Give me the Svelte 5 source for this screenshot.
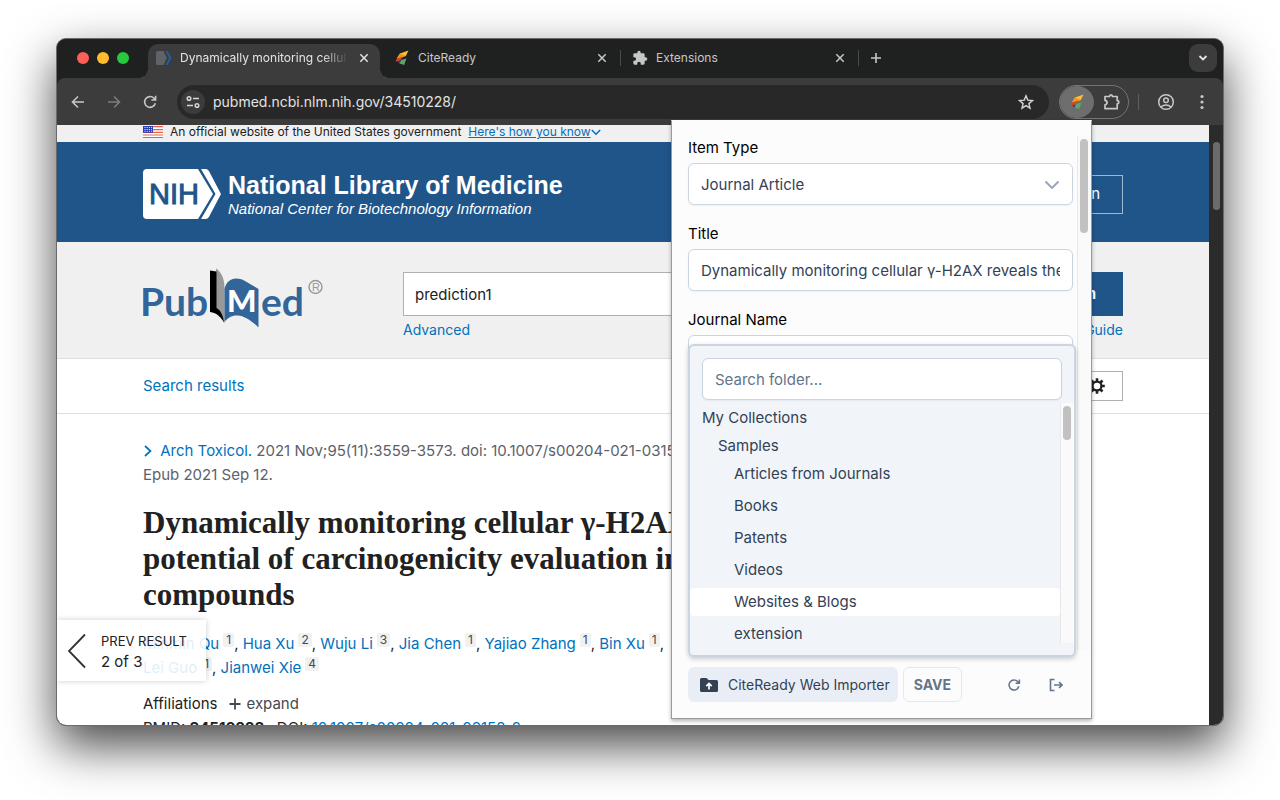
<script lang="ts">
	type Folder = { name: string; depth: number };

	const folders: Folder[] = [
		{ name: 'My Collections', depth: 0 },
		{ name: 'Samples', depth: 1 },
		{ name: 'Articles from Journals', depth: 2 },
		{ name: 'Books', depth: 2 },
		{ name: 'Patents', depth: 2 },
		{ name: 'Videos', depth: 2 },
		{ name: 'Websites & Blogs', depth: 2 },
		{ name: 'extension', depth: 2 }
	];

	const authors = [
		{ name: 'Minmin Qu', aff: 1 },
		{ name: 'Hua Xu', aff: 2 },
		{ name: 'Wuju Li', aff: 3 },
		{ name: 'Jia Chen', aff: 1 },
		{ name: 'Yajiao Zhang', aff: 1 },
		{ name: 'Bin Xu', aff: 1 },
		{ name: 'Lei Guo', aff: 1 },
		{ name: 'Jianwei Xie', aff: 4 }
	];

	let selected = $state('Websites & Blogs');
	let itemType = $state('Journal Article');
	let title = $state('Dynamically monitoring cellular γ-H2AX reveals the potential of carcinogenicity evaluation');
	let journal = $state('');
	let folderQuery = $state('');
	let term = $state('prediction1');

	let visible = $derived(
		folders.filter((f) => f.name.toLowerCase().includes(folderQuery.toLowerCase()))
	);
</script>

{#snippet closeIcon()}
	<svg width="16" height="16" viewBox="0 0 16 16" fill="none" stroke="currentColor" stroke-width="1.5">
		<path d="M4.300 4.300l7.400 7.400M11.700 4.300l-7.400 7.400" />
	</svg>
{/snippet}

{#snippet citeLogo()}
	<svg width="16" height="16" viewBox="0 0 16 16">
		<path d="M14.5 0.5L6 3.6 2.8 8.6 11.8 6z" fill="#fbc02d" />
		<path d="M6 3.6L2.8 8.6 11.8 6z" fill="#f6931e" />
		<path d="M2.8 8.6L1.4 11.4 6 10.4 9.6 6.8z" fill="#d9431e" />
		<path d="M3 11.4l2.6 2.3 1.3-3.5z" fill="#4b3a86" />
		<path d="M7.2 10l5.2-1.6-2.2 6.6-4.6-1.4z" fill="#57a866" />
	</svg>
{/snippet}

<main class="desktop">
	<div class="window">
		<div class="tabstrip">
			<div class="lights">
				<span class="light red"></span>
				<span class="light yellow"></span>
				<span class="light green"></span>
			</div>
			<div class="tab active">
				<svg width="16" height="16" viewBox="0 0 16 16">
					<path d="M1.500 1H7.500l3.300 7-3.300 7H1.500A1.500 1.500 0 0 1 0 13.500V2.500A1.500 1.500 0 0 1 1.500 1z" fill="#5f6368" />
					<path d="M9.500 1h2L15.500 8l-4 7h-2l3.600-7z" fill="#205fa6" />
				</svg>
				<span class="tab-title fade">Dynamically monitoring cellular</span>
				<button class="tab-close" aria-label="Close tab">{@render closeIcon()}</button>
			</div>
			<div class="tab">
				{@render citeLogo()}
				<span class="tab-title">CiteReady</span>
				<button class="tab-close" aria-label="Close tab">{@render closeIcon()}</button>
			</div>
			<span class="tab-sep"></span>
			<div class="tab">
				<svg width="16" height="16" viewBox="0 0 24 24" fill="#c7c7c7">
					<path d="M20.500 11H19V7a2 2 0 0 0-2-2h-4V3.500a2.500 2.500 0 0 0-5 0V5H4a2 2 0 0 0-2 2v3.800h1.500a2.700 2.700 0 0 1 0 5.400H2V20a2 2 0 0 0 2 2h3.800v-1.500a2.700 2.700 0 0 1 5.400 0V22H17a2 2 0 0 0 2-2v-4h1.500a2.500 2.500 0 0 0 0-5z" />
				</svg>
				<span class="tab-title">Extensions</span>
				<button class="tab-close" aria-label="Close tab">{@render closeIcon()}</button>
			</div>
			<span class="tab-sep"></span>
			<button class="new-tab" aria-label="New tab">
				<svg width="16" height="16" viewBox="0 0 16 16" fill="none" stroke="currentColor" stroke-width="1.6">
					<path d="M8 3v10M3 8h10" />
				</svg>
			</button>
			<button class="tab-search" aria-label="Search tabs">
				<svg width="12" height="12" viewBox="0 0 12 12" fill="none" stroke="#e3e3e3" stroke-width="1.8">
					<path d="M2.500 4l3.500 3.500L9.500 4" />
				</svg>
			</button>
		</div>

		<div class="toolbar">
			<button class="tool" aria-label="Back">
				<svg width="18" height="18" viewBox="0 0 18 18" fill="none" stroke="#c7c7c7" stroke-width="1.600">
					<path d="M15 9H4M9 3.500L3.500 9 9 14.500" />
				</svg>
			</button>
			<button class="tool" aria-label="Forward">
				<svg width="18" height="18" viewBox="0 0 18 18" fill="none" stroke="#7c7c7c" stroke-width="1.600">
					<path d="M3 9h11M9 3.500L14.500 9 9 14.500" />
				</svg>
			</button>
			<button class="tool" aria-label="Reload">
				<svg width="18" height="18" viewBox="0 0 18 18" fill="none" stroke="#c7c7c7" stroke-width="1.600">
					<path d="M14.300 10.200A5.400 5.400 0 1 1 13 5.300L14.500 7M14.600 2.800V7H10.400" />
				</svg>
			</button>
			<div class="omnibox">
				<button class="site-info" aria-label="Site information">
					<svg width="16" height="16" viewBox="0 0 16 16" fill="none" stroke="#d5d5d5" stroke-width="1.500">
						<circle cx="4" cy="4.500" r="1.800" />
						<path d="M8 4.500h6M2 11.500h6" />
						<circle cx="12" cy="11.500" r="1.800" />
					</svg>
				</button>
				<input class="url" aria-label="Address bar" value="pubmed.ncbi.nlm.nih.gov/34510228/" />
				<button class="star" aria-label="Bookmark">
					<svg width="18" height="18" viewBox="0 0 18 18" fill="none" stroke="#d5d5d5" stroke-width="1.400">
						<path d="M9 2.800l1.800 4.300 4.700.4-3.600 3.100 1.100 4.600L9 12.700l-4 2.500 1.100-4.600L2.500 7.500l4.700-.4z" />
					</svg>
				</button>
			</div>
			<div class="ext-pill">
				<button class="ext current" aria-label="CiteReady extension">{@render citeLogo()}</button>
				<button class="ext" aria-label="Extensions menu">
					<svg width="20" height="20" viewBox="0 0 20 20" fill="none" stroke="#c7c7c7" stroke-width="1.700">
						<path d="M4 4.500h4.500c0-2.200 3-2.200 3 0h4.700v4.200c2.200 0 2.200 3.200 0 3.200v4.800H4v-3.900c2.800-.4 2.800-4 0-4.400z" stroke-linejoin="round" />
					</svg>
				</button>
			</div>
			<span class="tool-sep"></span>
			<button class="tool" aria-label="Profile">
				<svg width="18" height="18" viewBox="0 0 18 18" fill="none" stroke="#c7c7c7" stroke-width="1.500">
					<circle cx="9" cy="9" r="7.300" />
					<circle cx="9" cy="7.200" r="2.300" />
					<path d="M4 14c2.800-2.700 7.200-2.700 10 0" />
				</svg>
			</button>
			<button class="tool" aria-label="Menu">
				<svg width="18" height="18" viewBox="0 0 18 18" fill="#c7c7c7">
					<circle cx="9" cy="3.500" r="1.600" />
					<circle cx="9" cy="9" r="1.600" />
					<circle cx="9" cy="14.500" r="1.600" />
				</svg>
			</button>
		</div>

		<div class="viewport">
			<div class="page">
				<div class="gov-banner">
					<div class="container gov-inner">
						<svg width="20" height="12" viewBox="0 0 20 12">
							<rect width="20" height="12" fill="#fff" />
							<path d="M0 .7h20M0 3.600h20M0 6.300h20M0 9h20M0 11.500h20" stroke="#e8604a" stroke-width="1.200" />
							<rect width="10" height="6.800" fill="#2b3fb5" />
							<path d="M1.500 1.500h8M1.500 3.500h8M1.500 5.300h8" stroke="#fff" stroke-width=".9" stroke-dasharray="1 1.200" />
						</svg>
						<span>An official website of the United States government</span>
						<a href="#know">Here's how you know
							<svg width="10" height="8" viewBox="0 0 10 8" fill="none" stroke="#0071bc" stroke-width="1.500">
								<path d="M.8 2L5 6.200 9.200 2" />
							</svg></a>
					</div>
				</div>

				<header class="nih-header">
					<div class="container nih-inner">
						<a class="nih-brand" href="#nih" aria-label="National Library of Medicine">
							<svg width="78" height="50" viewBox="0 0 78 50">
								<path d="M4 0H55L70 25 55 50H4A4 4 0 0 1 0 46V4A4 4 0 0 1 4 0z" fill="#fff" />
								<path d="M58 0h4.500a4 4 0 0 1 3.400 2L78 25 65.900 48a4 4 0 0 1-3.400 2H58l14.500-25z" fill="#fff" />
								<text x="6" y="35" class="nih-mark">NIH</text>
							</svg>
							<span class="nih-text">
								<strong>National Library of Medicine</strong>
								<em>National Center for Biotechnology Information</em>
							</span>
						</a>
						<button class="login">Log in</button>
					</div>
				</header>

				<section class="search-band">
					<div class="container search-inner">
						<a class="pubmed-logo" href="#home" aria-label="PubMed">
							<svg width="182" height="64" viewBox="0 0 182 64">
								<text x="-3" y="49" class="pub-text">Pub</text>
								<path d="M73 1.500c5 3 8.500 10 8.500 19V56c-2-8-5-12-8.500-14z" fill="#999" />
								<path d="M67 3.500l6.500 1V41c4 2 6.500 7 7.800 15-3.300-6-7.300-10-14.300-11z" fill="#000" />
								<path d="M81.500 22C84 12 92 9 102 14l13.500 8v38.500C108 53 101 49 95 48.500c-6-.5-10 2-13.500 6.500z" fill="#326599" />
								<text x="84" y="45" class="m-text">M</text>
								<text x="118" y="49" class="pub-text">ed</text>
								<circle cx="172.500" cy="20" r="6.500" fill="none" stroke="#999" stroke-width="1.400" />
								<text x="169" y="24" class="reg">R</text>
							</svg>
						</a>
						<form class="search-form" onsubmit={(e) => e.preventDefault()}>
							<div class="search-row">
								<input aria-label="Search term" bind:value={term} />
								<button>Search</button>
							</div>
							<div class="search-links">
								<a href="#advanced">Advanced</a>
								<a href="#guide">User Guide</a>
							</div>
						</form>
					</div>
				</section>

				<div class="results-bar">
					<div class="container results-inner">
						<a href="#results">Search results</a>
						<button aria-label="Display options">
							<svg width="18" height="18" viewBox="0 0 18 18" fill="none" stroke="#212121">
								<circle cx="9" cy="9" r="4.400" stroke-width="2.200" />
								<path d="M9 1.200v3M9 13.800v3M1.200 9h3M13.800 9h3M3.500 3.500l2 2M12.500 12.500l2 2M3.500 14.500l2-2M12.500 5.500l2-2" stroke-width="2.600" />
							</svg>
						</button>
					</div>
				</div>

				<article class="container article">
					<p class="citation">
						<svg width="10" height="14" viewBox="0 0 10 14" fill="none" stroke="#0071bc" stroke-width="1.700">
							<path d="M2 2l5.500 5L2 12" />
						</svg>
						<a href="#journal">Arch Toxicol.</a> 2021 Nov;95(11):3559-3573. doi: 10.1007/s00204-021-03158-2.<br />Epub 2021 Sep 12.
					</p>
					<h1>Dynamically monitoring cellular γ-H2AX reveals the<br />potential of carcinogenicity evaluation in<br />compounds</h1>
					<p class="authors">
						{#each authors as a, i}
							<span class="author"><a href="#author">{a.name}</a><sup>{a.aff}</sup>{i < authors.length - 1 ? ',' : ''}</span>{' '}
							{#if i === 5}<br />{/if}
						{/each}
					</p>
					<p class="affiliations">
						Affiliations
						<button>
							<svg width="12" height="12" viewBox="0 0 12 12" stroke="#424a52" stroke-width="1.800">
								<path d="M6 .5v11M.5 6h11" />
							</svg>
							expand
						</button>
					</p>
					<p class="ids">PMID: <strong>34510228</strong> &nbsp; DOI: <a href="#doi">10.1007/s00204-021-03158-2</a></p>
				</article>

				<a class="prev" href="#prev">
					<svg width="20" height="36" viewBox="0 0 20 36" fill="none" stroke="#333" stroke-width="1.800">
						<path d="M18 1.500L2 18l16 16.500" />
					</svg>
					<span>
						<small>PREV RESULT</small>
						<b>2 of 3</b>
					</span>
				</a>
			</div>
			<div class="page-scroll"><span></span></div>
		</div>

		<div class="popup">
			<div class="popup-body">
				<div class="fields">
					<div class="field">
						<label for="item-type">Item Type</label>
						<div class="select-wrap">
							<select id="item-type" bind:value={itemType}>
								<option>Journal Article</option>
								<option>Book</option>
								<option>Web Page</option>
							</select>
							<svg width="16" height="10" viewBox="0 0 16 10" fill="none" stroke="#94a3b8" stroke-width="1.800">
								<path d="M1.500 1.500L8 8l6.500-6.500" />
							</svg>
						</div>
					</div>
					<div class="field">
						<label for="title">Title</label>
						<div class="input-box"><input id="title" bind:value={title} /></div>
					</div>
					<div class="field">
						<label for="journal">Journal Name</label>
						<div class="input-box"><input id="journal" bind:value={journal} /></div>
					</div>
				</div>
				<div class="popup-scroll"><span></span></div>
			</div>

			<div class="popup-footer">
				<div class="dropdown">
					<div class="input-box folder-search">
						<input aria-label="Search folder" placeholder="Search folder..." bind:value={folderQuery} />
					</div>
					<div class="tree">
						<div class="rows">
							{#each visible as f}
								<button
									class="row depth-{f.depth}"
									class:selected={selected === f.name}
									onclick={() => (selected = f.name)}
								>
									{f.name}
								</button>
							{/each}
						</div>
						<div class="tree-scroll"><span></span></div>
					</div>
				</div>
				<button class="importer">
					<svg width="18" height="14" viewBox="0 0 18 14">
						<path d="M1.500 0H6.500l2 2h8A1.500 1.500 0 0 1 18 3.500v9a1.500 1.500 0 0 1-1.500 1.500h-15A1.500 1.500 0 0 1 0 12.500v-11A1.500 1.500 0 0 1 1.500 0z" fill="#334155" />
						<path d="M9 11.500V6M6.300 8.200L9 5.500l2.700 2.700" fill="none" stroke="#fff" stroke-width="1.700" />
					</svg>
					CiteReady Web Importer
				</button>
				<button class="save">SAVE</button>
				<button class="mini" aria-label="Refresh">
					<svg width="14" height="14" viewBox="0 0 14 14" fill="none" stroke="#64748b" stroke-width="1.500">
						<path d="M11.900 8.300A5 5 0 1 1 10.800 3.700L12 5M12.400 1.400V5.200H8.600" />
					</svg>
				</button>
				<button class="mini" aria-label="Log out">
					<svg width="14" height="14" viewBox="0 0 14 14" fill="none" stroke="#64748b" stroke-width="1.600">
						<path d="M5.500 1.500H1.500v11h4M5 7h8M10 4l3 3-3 3" />
					</svg>
				</button>
			</div>
		</div>
	</div>
</main>

<style>
	:global(body) {
		background: #fff;
	}

	.desktop,
	.desktop * {
		box-sizing: border-box;
	}

	.desktop {
		display: flex;
		height: 100vh;
		padding: 38px 56px 74px;
		overflow: hidden;
		font-family: Inter, 'Liberation Sans', sans-serif;
		font-size: 15px;
		line-height: 24px;
		color: #212121;
	}

	button,
	input,
	select {
		font: inherit;
		color: inherit;
		margin: 0;
		padding: 0;
		border: 0;
		background: none;
	}

	button {
		display: flex;
		align-items: center;
		justify-content: center;
		cursor: pointer;
	}

	input {
		min-width: 0;
		outline: none;
	}

	svg {
		display: block;
		flex: none;
	}

	a {
		color: #0071bc;
		text-decoration: none;
	}

	p,
	h1 {
		margin: 0;
	}

	.window {
		position: relative;
		display: flex;
		flex-direction: column;
		flex: 1;
		min-width: 0;
		border: 1px solid #6b6b6b;
		border-radius: 10px;
		background: #1f2120;
		box-shadow: 0 20px 48px rgba(0, 0, 0, 0.72);
	}

	/* tab strip */
	.tabstrip {
		display: flex;
		align-items: flex-end;
		height: 39px;
		padding-right: 6px;
		border-radius: 9px 9px 0 0;
		background: #1f2120;
		color: #c7c7c7;
		font-size: 12px;
	}

	.lights {
		display: flex;
		align-items: center;
		gap: 8px;
		height: 40px;
		padding: 0 19px 0 20px;
	}

	.light {
		width: 12px;
		height: 12px;
		border-radius: 50%;
	}

	.red {
		background: #ff5f57;
	}

	.yellow {
		background: #febc2e;
	}

	.green {
		background: #28c840;
	}

	.tab {
		display: flex;
		align-items: center;
		gap: 8px;
		width: 234px;
		height: 34px;
		padding: 0 10px 6px 8px;
	}

	.tab.active {
		position: relative;
		width: 232px;
		margin-right: 6px;
		padding-right: 8px;
		border-radius: 10px 10px 0 0;
		background: #3c3c3c;
		color: #e3e3e3;
	}

	/* the flared feet of the selected tab */
	.tab.active::before,
	.tab.active::after {
		content: '';
		position: absolute;
		bottom: 0;
		width: 10px;
		height: 10px;
	}

	.tab.active::before {
		right: 100%;
		background: radial-gradient(circle at 0 0, transparent 10px, #3c3c3c 10px);
	}

	.tab.active::after {
		left: 100%;
		background: radial-gradient(circle at 100% 0, transparent 10px, #3c3c3c 10px);
	}

	.tab-title {
		flex: 1;
		min-width: 0;
		overflow: hidden;
		white-space: nowrap;
	}

	.fade {
		mask-image: linear-gradient(90deg, #000 85%, transparent 100%);
	}

	.tab-sep {
		width: 1px;
		height: 16px;
		margin: 0 3px 12px 0;
		background: #4a4a4a;
	}

	.new-tab {
		width: 28px;
		height: 28px;
		margin-bottom: 6px;
	}

	.tab-search {
		width: 28px;
		height: 28px;
		margin: 0 0 6px auto;
		border-radius: 9px;
		background: #3c3c3c;
	}

	/* toolbar */
	.toolbar {
		display: flex;
		align-items: center;
		height: 47px;
		padding: 0 3px;
		border-radius: 8px 8px 0 0;
		background: #3c3c3c;
	}

	.tool {
		width: 36px;
		height: 34px;
	}

	.omnibox {
		display: flex;
		align-items: center;
		flex: 1;
		height: 34px;
		margin: 0 10px 0 9px;
		padding: 0 14px 0 4px;
		border-radius: 17px;
		background: #282828;
	}

	.site-info {
		width: 24px;
		height: 24px;
		border-radius: 50%;
		background: #3c3c3c;
	}

	.url {
		flex: 1;
		margin-left: 8px;
		color: #e3e3e3;
		font-size: 14px;
	}

	.ext-pill {
		display: flex;
		width: 70px;
		height: 34px;
		border: 1px solid #757575;
		border-radius: 17px;
	}

	.ext {
		flex: 1;
	}

	.ext.current {
		border-radius: 50%;
		background: #6e6e6e;
	}

	.tool-sep {
		width: 1px;
		height: 16px;
		margin: 0 9px;
		background: #5f5f5f;
	}

	/* web page */
	.viewport {
		display: flex;
		flex: 1;
		min-height: 0;
		overflow: hidden;
		border-radius: 0 0 9px 9px;
		background: #fff;
	}

	.page {
		position: relative;
		flex: 1;
		min-width: 0;
		overflow: hidden;
	}

	.page-scroll {
		width: 14px;
		padding: 17px 3px 0 4px;
		background: #2b2b2b;
	}

	.page-scroll span {
		display: block;
		height: 68px;
		border-radius: 4px;
		background: #6b6b6b;
	}

	.container {
		max-width: 980px;
		margin: 0 auto;
	}

	.gov-banner {
		padding-bottom: 4px;
		background: #f0f0f0;
		font-size: 12px;
		line-height: 13px;
	}

	.gov-inner {
		display: flex;
		align-items: center;
		gap: 7px;
	}

	.gov-inner a {
		display: flex;
		align-items: center;
		text-decoration: underline;
	}

	.nih-header {
		background: #20558a;
	}

	.nih-inner {
		display: flex;
		align-items: center;
		justify-content: space-between;
		height: 100px;
		padding-top: 4px;
	}

	.nih-brand {
		display: flex;
		align-items: center;
		gap: 7px;
		color: #fff;
		font-family: 'Liberation Sans', sans-serif;
	}

	.nih-mark {
		font-family: 'Liberation Sans', sans-serif;
		font-size: 29px;
		fill: #20558a;
		stroke: #20558a;
		stroke-width: 1px;
	}

	.nih-text {
		padding-top: 3px;
	}

	.nih-text strong,
	.nih-text em {
		display: block;
		white-space: nowrap;
	}

	.nih-text strong {
		font-size: 25px;
		line-height: 26px;
	}

	.nih-text em {
		font-size: 15px;
		line-height: 22px;
	}

	.login {
		height: 39px;
		padding: 0 22px;
		border: 1px solid #9fb7d0;
		color: #fff;
	}

	.search-band {
		border-bottom: 1px solid #dfdfdf;
		background: #f0f0f0;
	}

	.search-inner {
		display: flex;
		align-items: flex-start;
		padding: 30px 0 16px;
	}

	.pubmed-logo {
		width: 260px;
		height: 64px;
		margin-top: -5px;
	}

	.pub-text,
	.m-text {
		font-family: Lato, 'Open Sans', sans-serif;
		font-weight: 700;
		font-size: 39px;
		fill: #326599;
	}

	.m-text {
		font-size: 31px;
		font-weight: 900;
		fill: #fff;
	}

	.reg {
		font-family: 'Liberation Sans', sans-serif;
		font-size: 11px;
		fill: #999;
	}

	.search-form {
		flex: 1;
	}

	.search-row {
		display: flex;
		height: 44px;
	}

	.search-row input {
		flex: 1;
		padding: 2px 11px 0;
		border: 1px solid #aeb0b5;
		background: #fff;
	}

	.search-row button {
		padding: 0 27px;
		background: #20558a;
		color: #fff;
		font-weight: 700;
	}

	.search-links {
		display: flex;
		justify-content: space-between;
		padding-top: 2px;
		font-size: 14px;
	}

	.results-bar {
		border-bottom: 1px solid #dfdfdf;
	}

	.results-inner {
		display: flex;
		align-items: center;
		justify-content: space-between;
		padding: 12px 0;
	}

	.results-inner button {
		height: 30px;
		padding: 0 16px;
		border: 1px solid #aeb0b5;
	}

	.article {
		padding-top: 25px;
	}

	.citation {
		color: #5b616b;
		white-space: nowrap;
	}

	.citation svg {
		display: inline-block;
		margin-right: 3px;
		vertical-align: -2px;
	}

	h1 {
		padding: 18px 0 19px;
		font-family: 'Liberation Serif', serif;
		font-size: 31px;
		line-height: 36px;
		white-space: nowrap;
	}

	.author {
		white-space: nowrap;
	}

	sup {
		display: inline-block;
		margin-left: 4px;
		padding: 0 3px;
		border-radius: 2px;
		background: #f1f1f1;
		color: #424a52;
		font-size: 12px;
		line-height: 14px;
		vertical-align: 5px;
	}

	.affiliations {
		display: flex;
		gap: 11px;
		padding-top: 12px;
	}

	.affiliations button {
		gap: 6px;
		color: #424a52;
	}

	.prev {
		position: absolute;
		left: 0;
		bottom: 44px;
		display: flex;
		align-items: center;
		gap: 14px;
		padding: 11px 19px 10px 10px;
		background: rgba(255, 255, 255, 0.88);
		box-shadow: 0 0 6px rgba(0, 0, 0, 0.2);
		color: #212121;
	}

	.prev small,
	.prev b {
		display: block;
		font-size: 13px;
		font-weight: 400;
		line-height: 21px;
	}

	.prev b {
		font-size: 15px;
		line-height: 19px;
	}

	/* extension popup */
	.popup {
		position: absolute;
		top: 81px;
		right: 131px;
		bottom: 6px;
		display: flex;
		flex-direction: column;
		width: 421px;
		padding-top: 15px;
		border: 1px solid #999;
		border-top-color: #fcfcfc;
		background: #fcfcfc;
		box-shadow: 0 2px 4px rgba(0, 0, 0, 0.3);
		color: #334155;
	}

	.popup-body {
		display: flex;
		flex: 1;
		min-height: 0;
		overflow: hidden;
	}

	.fields {
		flex: 1;
		min-width: 0;
		padding: 0 4px 0 16px;
	}

	.field {
		padding-bottom: 17px;
	}

	.field label {
		display: block;
		margin-bottom: 3px;
		color: #000;
	}

	.select-wrap,
	.input-box {
		display: flex;
		align-items: center;
		height: 42px;
		padding: 1px 12px 0;
		border: 1px solid #cbd5e1;
		border-radius: 6px;
		background: #fff;
		box-shadow: 0 1px 2px rgba(0, 0, 0, 0.05);
	}

	.select-wrap select {
		flex: 1;
		appearance: none;
		outline: none;
	}

	.input-box input {
		flex: 1;
	}

	.popup-scroll,
	.tree-scroll {
		width: 14px;
		padding: 3px 2px 0;
		border-left: 1px solid #e8e8e8;
		background: #fafafa;
	}

	.popup-scroll span,
	.tree-scroll span {
		display: block;
		width: 8px;
		height: 94px;
		border-radius: 4px;
		background: #c1c1c1;
	}

	.tree-scroll span {
		height: 34px;
	}

	.popup-footer {
		position: relative;
		display: flex;
		align-items: center;
		gap: 5px;
		padding: 17px 17px 16px 16px;
	}

	.importer {
		gap: 10px;
		height: 35px;
		padding: 0 8px 0 12px;
		border-radius: 6px;
		background: #e9eef6;
		font-size: 14px;
	}

	.save {
		height: 35px;
		margin-right: auto;
		padding: 0 10px;
		border: 1px solid #e2e8f0;
		border-radius: 6px;
		color: #64748b;
		font-size: 14px;
		font-weight: 700;
	}

	.mini {
		width: 37px;
		height: 35px;
	}

	.dropdown {
		position: absolute;
		left: 16px;
		right: 15px;
		bottom: 61px;
		padding: 12px 0;
		border: 2px solid #cbd5e1;
		border-radius: 6px;
		background: #f1f5f9;
		box-shadow: 0 2px 5px rgba(0, 0, 0, 0.2);
	}

	.folder-search {
		margin: 0 12px 3px;
	}

	.folder-search input::placeholder {
		color: #64748b;
		opacity: 1;
	}

	.tree {
		display: flex;
		height: 240px;
		overflow: hidden;
	}

	.rows {
		flex: 1;
		padding-top: 1px;
	}

	.row {
		justify-content: flex-start;
		width: 100%;
		height: 28px;
		border-radius: 4px;
	}

	.depth-0 {
		padding-left: 12px;
	}

	.depth-1 {
		padding-left: 28px;
	}

	.depth-2 {
		margin-bottom: 4px;
		padding-left: 44px;
	}

	.row.selected {
		background: #fff;
	}
</style>
